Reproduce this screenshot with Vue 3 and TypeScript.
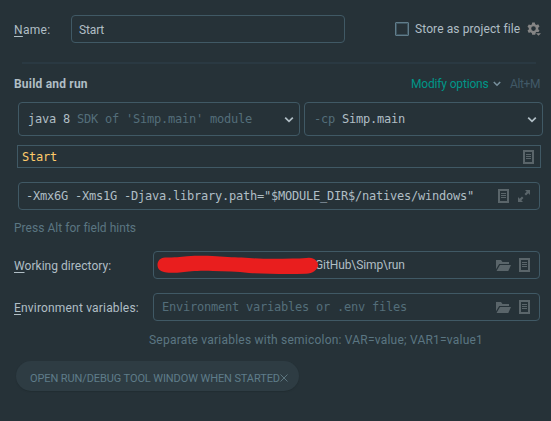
<script setup lang="ts">
interface FieldRow {
  key: string
  rest: string
  placeholder: string
  value: string
  redacted: boolean
}

const rows: FieldRow[] = [
  { key: 'W', rest: 'orking directory:', placeholder: '', value: 'GitHub\\Simp\\run', redacted: true },
  { key: 'E', rest: 'nvironment variables:', placeholder: 'Environment variables or .env files', value: '', redacted: false },
]
const vmOptions = '-Xmx6G -Xms1G -Djava.library.path="$MODULE_DIR$/natives/windows"'
</script>

<template>
  <main class="dialog">
    <div class="name-row">
      <label class="name-label t-name"><u>N</u>ame:</label>
      <div class="field name-field"><span class="t-start">Start</span></div>
      <span class="checkbox"></span>
      <span class="store t-store">Store as project file</span>
      <svg class="gear" width="15" height="15" viewBox="0 0 15 15">
        <path fill="#858585" fill-rule="evenodd" d="M5.200.5h2.600l.4 1.700 1.300.7 1.700-.6 1.300 2.300-1.300 1.200v1.400l1.300 1.200-1 1.700H9l-.8 2.600H5.200L4.800 11l-1.300-.7-1.700.6L.5 8.600l1.300-1.200V6L.5 4.800l1.300-2.300 1.700.6 1.300-.7zM6.500 4.300a2.300 2.300 0 1 0 0 4.600 2.300 2.300 0 0 0 0-4.600z" />
        <path fill="#858585" d="M9 11.300h5L11.500 13.800z" />
      </svg>
    </div>
    <div class="divider"></div>

    <div class="title-row">
      <b class="t-title">Build and run</b>
      <span class="modify t-modify">Modify options</span>
      <svg class="mod-chev" width="8" height="6" viewBox="0 0 8 6"><path d="M.8 1 4 4.200 7.200 1" fill="none" stroke="#78909c" stroke-width="1.600" /></svg>
      <span class="shortcut t-alt">Alt+M</span>
    </div>

    <div class="combos">
      <div class="field combo jdk mono">
        <span>java 8 <i>SDK of 'Simp.main' module</i></span>
        <svg width="10" height="7" viewBox="0 0 10 7"><path d="M1.200 1.700 5 5.300 8.800 1.700" fill="none" stroke="#b0bec5" stroke-width="1.800" /></svg>
      </div>
      <div class="field combo cp mono">
        <span><i>-cp</i> Simp.main</span>
        <svg width="10" height="7" viewBox="0 0 10 7"><path d="M1.200 1.700 5 5.300 8.800 1.700" fill="none" stroke="#b0bec5" stroke-width="1.800" /></svg>
      </div>
    </div>

    <div class="main-class mono">
      <span>Start</span>
      <svg width="11" height="14" viewBox="0 0 11 14"><path fill="#5a656a" fill-rule="evenodd" d="M0 0h11v14H0zM2 2v10h7V2z" /><path d="M3 4.500h5M3 6.500h5M3 8.500h5" stroke="#5a656a" /></svg>
    </div>

    <div class="field vm mono">
      <span>{{ vmOptions }}</span>
      <svg class="doc" width="11" height="14" viewBox="0 0 11 14"><path fill="#5a656a" fill-rule="evenodd" d="M0 0h11v14H0zM2 2v10h7V2z" /><path d="M3 4.500h5M3 6.500h5M3 8.500h5" stroke="#5a656a" /></svg>
      <svg class="expand" width="12" height="12" viewBox="0 0 12 12"><path fill="#5a656a" d="M7 0h5v5l-1.700-1.700L8 5.600 6.500 4.100 8.700 1.700zM0 7l1.700 1.700L4 6.400l1.500 1.500-2.200 2.400L5 12H0z" /></svg>
    </div>
    <p class="hint t-hint">Press Alt for field hints</p>

    <div v-for="row in rows" :key="row.key" class="form-row">
      <label :class="row.redacted ? 't-wd' : 't-env'"><u>{{ row.key }}</u>{{ row.rest }}</label>
      <div class="field path-field">
        <svg v-if="row.redacted" class="marker" width="162" height="20" viewBox="0 0 162 20">
          <path fill="#e91e1e" d="M8 2.500 C18 2.500 23 2 30 1.200 C42 .4 56 .6 63 1.600 C74 2.700 82 2.200 92 3 C105 4 120 4 135 3.500 C143 3.800 148 2.700 152 2.700 C158 3 161 6.500 161 10.500 C160 15 156 18.600 149 18.800 C130 19.300 108 19 92 17.900 C80 16.500 68 16.500 56 16 C40 15.400 32 16.600 25 17.200 C18 18 12 17.800 8 17.200 C3 16.500 .5 13.600 .5 10 C.5 6 3 2.700 8 2.500z" />
        </svg>
        <span v-if="row.value" class="path t-path">{{ row.value }}</span>
        <span v-else class="placeholder mono">{{ row.placeholder }}</span>
        <svg class="folder" width="15" height="11" viewBox="0 0 15 11"><path fill="#5a656a" d="M0 0h5l1.500 2H13v2H3.200L0 9.200zM4 5h11l-2.700 6H.5z" /></svg>
        <svg class="doc" width="11" height="14" viewBox="0 0 11 14"><path fill="#5a656a" fill-rule="evenodd" d="M0 0h11v14H0zM2 2v10h7V2z" /><path d="M3 4.500h5M3 6.500h5M3 8.500h5" stroke="#5a656a" /></svg>
      </div>
    </div>
    <p class="hint env-hint t-sep">Separate variables with semicolon: VAR=value; VAR1=value1</p>

    <div class="chip">
      <span class="t-chip">OPEN RUN/DEBUG TOOL WINDOW WHEN STARTED</span>
      <svg width="8" height="8" viewBox="0 0 8 8"><path d="M.5.5l7 7M7.500.5l-7 7" stroke="#5c747e" /></svg>
    </div>
  </main>
</template>

<style>
body {
  background: #263238;
}
</style>

<style scoped>
.dialog {
  box-sizing: border-box;
  width: 551px;
  height: 421px;
  padding: 15px 0 0 14px;
  overflow: hidden;
  background: #263238;
  color: #b0bec5;
  font: 12px/18px Roboto, "Liberation Sans", sans-serif;
  white-space: pre;
}
svg {
  display: block;
  flex: none;
}
span, label, b {
  flex: none;
}
.field {
  box-sizing: border-box;
  display: flex;
  align-items: center;
  height: 28px;
  border: 1px solid #405965;
  border-radius: 4px;
}
.mono {
  font: 12px/18px "DejaVu Sans Mono", "Liberation Mono", monospace;
  letter-spacing: -0.224px;
}
.name-row {
  display: flex;
  align-items: center;
  height: 28px;
}
.name-label {
  width: 57px;
  padding-top: 2px;
}
u {
  text-underline-offset: 2px;
}
.name-field {
  width: 274px;
  padding: 2px 0 0 7px;
}
.checkbox {
  box-sizing: border-box;
  width: 14px;
  height: 14px;
  margin-left: 50px;
  border: 1px solid #607d8b;
  box-shadow: inset 0 0 0 1px #3d535e;
  border-radius: 1px;
}
.store {
  width: 105px;
  margin-left: 6px;
}
.gear {
  margin-left: 7px;
}
.divider {
  width: 514px;
  height: 2px;
  margin: 19px 0 10px 8px;
  background: #2a3942;
}
.title-row {
  display: flex;
  align-items: center;
  height: 20px;
}
.title-row b {
  width: 397px;
  font-weight: 700;
}
.modify {
  width: 78px;
  color: #009688;
}
.mod-chev {
  margin-left: 4px;
}
.shortcut {
  margin-left: 9px;
  color: #415967;
}
.combos {
  display: flex;
  gap: 4px;
  margin: 8px 0 9px 4px;
}
.combo {
  justify-content: space-between;
  height: 34px;
  padding: 0 5px 0 9px;
}
.combo i {
  color: #546e7a;
  font-style: normal;
}
.jdk {
  width: 282px;
}
.cp {
  width: 239px;
}
.main-class {
  box-sizing: border-box;
  display: flex;
  align-items: center;
  justify-content: space-between;
  width: 524px;
  height: 23px;
  margin-left: 3px;
  padding: 0 6px 0 4px;
  border: 1px solid #405965;
  color: #ffcb6b;
}
.vm {
  width: 522px;
  margin: 14px 0 9px 4px;
  padding: 0 9px 0 7px;
}
.vm .doc {
  margin-left: auto;
}
.expand {
  margin-left: 9px;
}
.hint {
  height: 18px;
  margin: 0 0 14px;
  color: #5b7682;
}
.form-row {
  display: flex;
  align-items: center;
  margin-bottom: 14px;
}
.form-row label {
  width: 139px;
  padding-top: 1px;
}
.path-field {
  position: relative;
  width: 387px;
  padding: 0 9px 0 8px;
}
.marker {
  position: absolute;
  top: 3px;
  left: 3px;
}
.path {
  margin-left: 153px;
}
.placeholder {
  color: #546e7a;
}
.folder {
  margin: 0 8px 0 auto;
}
.env-hint {
  margin: -4px 0 12px 135px;
}
.chip {
  box-sizing: border-box;
  display: flex;
  align-items: center;
  width: 283px;
  height: 30px;
  margin-left: 2px;
  padding: 4px 11px 0 14px;
  border-radius: 15px;
  background: #2e3c43;
  box-shadow: 0 1px 1px #222d32;
  color: #5f7c8a;
  font-size: 11px;
}
.chip span {
  width: 250px;
  padding-top: 1px;
}
.t-name {
  letter-spacing: 0.3px;
}
.t-start {
  letter-spacing: -0.15px;
}
.t-store {
  letter-spacing: 0.1px;
}
.t-title {
  letter-spacing: 0.2px;
}
.t-modify {
  letter-spacing: -0.17px;
}
.t-alt {
  letter-spacing: -0.4px;
}
.t-hint {
  letter-spacing: 0.03px;
}
.t-wd {
  letter-spacing: 0.04px;
}
.t-env {
  letter-spacing: 0.18px;
}
.t-path {
  letter-spacing: -0.1px;
}
.t-sep {
  letter-spacing: 0.22px;
}
.t-chip {
  letter-spacing: -0.1px;
}
</style>
